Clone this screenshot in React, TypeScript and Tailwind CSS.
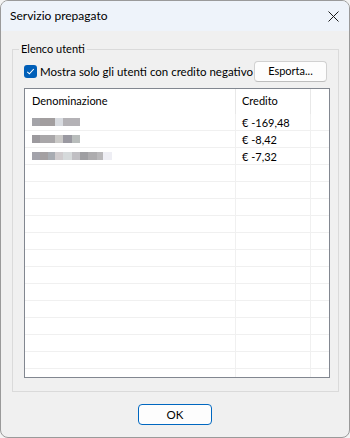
import React from "react";

const font = { fontFamily: "Lato, 'Noto Sans', sans-serif" };

type Block = [number, string];

const nameRows: Block[][] = [
  [[8, "#a4a4a9"], [15, "#a29e9f"], [8, "#d8dbe0"], [17, "#b4b2b6"]],
  [[8, "#9c9a9e"], [15, "#a9a7a9"], [8, "#cac9c7"], [9, "#9a99a1"], [8, "#b9bdbc"]],
  [[8, "#a3a3ab"], [8, "#a4a0a2"], [7, "#a8acb2"], [8, "#d0ccce"], [9, "#d6dadb"], [8, "#c0bfc3"], [8, "#9f9fa2"], [9, "#adacae"], [6, "#b9b8ba"], [9, "#eeeef4"]],
];

const credits = ["€ -169,48", "€ -8,42", "€ -7,32"];

function Row({ i }: { i: number }) {
  const blocks = nameRows[i];
  return (
    <div className="flex h-[17px] shrink-0 border-b border-[#f0f0f0]">
      <div className="flex w-[211px] items-center border-r border-[#f0f0f0] pl-[7px]">
        {blocks && (
          <div className="flex h-[8px]">
            {blocks.map(([w, c], k) => (
              <div key={k} style={{ width: w, background: c }} className="h-full" />
            ))}
          </div>
        )}
      </div>
      <div className="flex w-[75px] items-center border-r border-[#f0f0f0] pl-[6px] text-[11px] leading-none text-black">
        {credits[i] ?? ""}
      </div>
      <div className="flex-1" />
    </div>
  );
}

export default function App() {
  return (
    <div className="h-[438px] w-[350px] bg-[#f3f3f3]" style={font}>
      <div className="flex h-full w-full flex-col overflow-hidden rounded-[8px] border border-[#9a9a9a] bg-[#f0f0f0]">
        <div className="flex h-[30px] shrink-0 items-center justify-between bg-[#eef3fa] pl-[9px] pr-[10px]">
          <span className="text-[12px] text-black">Servizio prepagato</span>
          <svg width="11" height="11" viewBox="0 0 11 11" className="mt-[1px]">
            <path d="M0.5 0.5 L10.5 10.5 M10.5 0.5 L0.5 10.5" stroke="#1a1a1a" strokeWidth="1" />
          </svg>
        </div>
        <div className="flex flex-col">
          <div className="relative ml-[11px] mr-[10px] mt-[18px] h-[343px] border border-[#dadada] pl-[11px] pr-[8px] pt-[11px]">
            <span className="absolute left-[6px] top-[-8px] bg-[#f0f0f0] px-[2px] text-[11px] leading-[14px] text-black">
              Elenco utenti
            </span>
            <div className="flex h-[21px] items-center justify-between">
              <div className="flex items-center gap-[3px]">
                <div className="flex h-[13px] w-[13px] items-center justify-center rounded-[3px] bg-[#005fb8]">
                  <svg width="9" height="9" viewBox="0 0 9 9">
                    <path d="M1.3 4.8 L3.4 6.8 L7.8 2" fill="none" stroke="#ffffff" strokeWidth="1.1" />
                  </svg>
                </div>
                <span className="text-[11.5px] text-black">Mostra solo gli utenti con credito negativo</span>
              </div>
              <button className="mr-[3px] flex h-[21px] w-[73px] items-center justify-center rounded-[4px] border border-[#d1d1d1] border-b-[#bdbdbd] bg-[#fdfdfd] text-[11px] text-black">
                Esporta...
              </button>
            </div>
            <div className="mt-[6px] flex h-[290px] flex-col overflow-hidden border border-[#828790] bg-white">
              <div className="flex h-[25px] shrink-0">
                <div className="flex w-[211px] items-center border-r border-[#e8e8e8] pl-[7px] text-[11px] text-black">
                  Denominazione
                </div>
                <div className="flex w-[75px] items-center border-r border-[#e8e8e8] pl-[6px] text-[11px] text-black">
                  Credito
                </div>
                <div className="flex-1" />
              </div>
              {Array.from({ length: 17 }).map((_, i) => (
                <Row key={i} i={i} />
              ))}
            </div>
          </div>
          <div className="mt-[12px] flex justify-center">
            <button className="flex h-[21px] w-[74px] items-center justify-center rounded-[4px] border border-[#0067c0] bg-[#fdfdfd] text-[11.5px] text-black">
              OK
            </button>
          </div>
        </div>
      </div>
    </div>
  );
}
